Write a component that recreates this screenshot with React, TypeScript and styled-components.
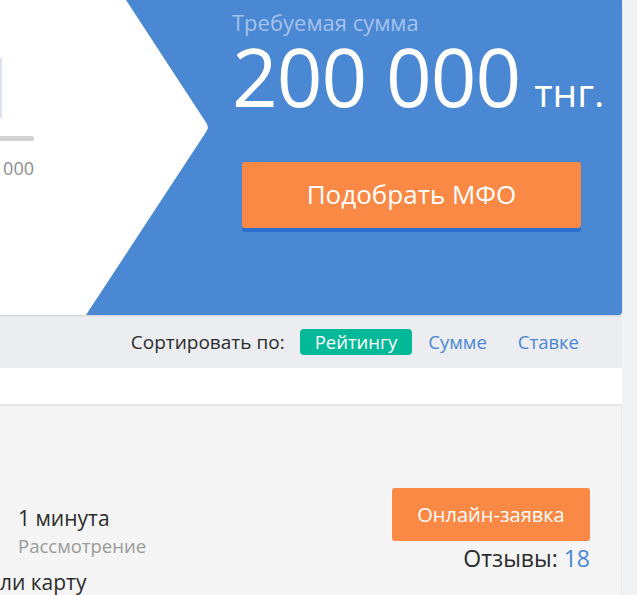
import styled, { createGlobalStyle } from 'styled-components';

const GlobalStyle = createGlobalStyle`
	html, body {
		margin: 0;
		padding: 0;
		background: #f1f2f4;
		font-family: 'Open Sans', 'Noto Sans', sans-serif;
		overflow: hidden;
	}
`;

export default function App() {
	return (
		<>
			<GlobalStyle />
			<Page>
				<Hero>
					<Chevron>
						<Calculator>
							<AmountInput />
							<Track />
							<Range>
								<span>10 000</span>
								<span>500 000</span>
							</Range>
						</Calculator>
					</Chevron>
					<Summary>
						<Caption>Требуемая сумма</Caption>
						<Amount>
							200 000
							<Currency>тнг.</Currency>
						</Amount>
						<PickButton>Подобрать МФО</PickButton>
					</Summary>
				</Hero>
				<SortBar>
					<SortLabel>Сортировать по:</SortLabel>
					<SortOption active>Рейтингу</SortOption>
					<SortOption>Сумме</SortOption>
					<SortOption>Ставке</SortOption>
				</SortBar>
				<Spacer />
				<Offer>
					<OfferRow>
						<Term>
							<TermValue>1 минута</TermValue>
							<TermLabel>Рассмотрение</TermLabel>
						</Term>
						<Actions>
							<ApplyButton>Онлайн-заявка</ApplyButton>
							<Reviews>
								Отзывы: <a>18</a>
							</Reviews>
						</Actions>
					</OfferRow>
					<Payout>На счёт или карту</Payout>
				</Offer>
			</Page>
		</>
	);
}

const Page = styled.div`
	width: 622px;
	height: 595px;
	display: flex;
	flex-direction: column;
`;

const Hero = styled.div`
	display: flex;
	height: 315px;
	flex: none;
	background: #4a88d4;
	border-bottom-right-radius: 4px;
	box-shadow: 0 1px 2px rgba(0, 0, 0, 0.12);
	position: relative;
	z-index: 1;
`;

const Chevron = styled.div`
	width: 209px;
	flex: none;
	background: #fff;
	clip-path: polygon(0 0, 126px 0, 207px 124px, 208px 128px, 206px 132px, 86px 100%, 0 100%);
	overflow: hidden;
	padding-top: 58px;
	box-sizing: border-box;
`;

const Calculator = styled.div`
	margin-left: -300px;
	width: 334px;
	display: flex;
	flex-direction: column;
`;

const AmountInput = styled.div`
	width: 302px;
	height: 60px;
	box-sizing: border-box;
	border: 2px solid #dde4f0;
`;

const Track = styled.div`
	margin-top: 18px;
	height: 5px;
	border-radius: 3px;
	background: #d2d2d2;
`;

const Range = styled.div`
	margin-top: 15px;
	display: flex;
	justify-content: space-between;
	font-size: 18px;
	color: #8c8c8c;
`;

const Summary = styled.div`
	flex: 1;
	padding: 8px 0 0 23px;
	display: flex;
	flex-direction: column;
	color: #fff;
`;

const Caption = styled.div`
	font-size: 22px;
	line-height: 28px;
	font-weight: 500;
	color: #a4c2ec;
`;

const Amount = styled.div`
	display: flex;
	align-items: baseline;
	font-size: 80px;
	line-height: 80px;
	white-space: nowrap;
	letter-spacing: -1px;
	font-weight: 500;
`;

const Currency = styled.span`
	margin-left: 14px;
	font-size: 39px;
	line-height: 40px;
	letter-spacing: 0;
`;

const PickButton = styled.button`
	margin: 46px 0 0 10px;
	width: 339px;
	height: 66px;
	border: none;
	border-radius: 3px;
	background: #f98944;
	box-shadow: 0 4px 0 #2b6fcf;
	color: #fff;
	font-family: inherit;
	font-size: 26px;
	font-weight: 500;
	padding: 0 0 2px;
`;

const SortBar = styled.div`
	height: 53px;
	flex: none;
	background: #ecedf0;
	display: flex;
	align-items: center;
	justify-content: flex-end;
	padding-right: 43px;
	gap: 16px;
	font-weight: 500;
`;

const SortLabel = styled.span`
	font-size: 19px;
	color: #2b2b2b;
	margin-right: -1px;
`;

const SortOption = styled.span<{ active?: boolean }>`
	font-size: 18.5px;
	line-height: 22px;
	padding: ${({ active }) => (active ? '2px 15px' : '2px 0')};
	border-radius: 4px;
	background: ${({ active }) => (active ? '#03b997' : 'transparent')};
	color: ${({ active }) => (active ? '#fff' : '#4a86d4')};
	margin-right: ${({ active }) => (active ? '0' : '15px')};

	&:last-child {
		margin-right: 0;
	}
`;

const Spacer = styled.div`
	height: 36px;
	flex: none;
	background: #fff;
	border-bottom: 2px solid #e6e6e6;
`;

const Offer = styled.div`
	flex: 1;
	background: #f5f5f5;
	border-right: 1px solid #e8e9eb;
	padding: 82px 31px 0 0;
	display: flex;
	flex-direction: column;
	font-weight: 500;
`;

const OfferRow = styled.div`
	display: flex;
	justify-content: space-between;
	align-items: flex-start;
`;

const Term = styled.div`
	padding: 16px 0 0 18px;
	display: flex;
	flex-direction: column;
`;

const TermValue = styled.div`
	font-size: 21px;
	line-height: 29px;
	color: #2b2b2b;
`;

const TermLabel = styled.div`
	font-size: 18.5px;
	line-height: 26px;
	color: #9a9a9a;
`;

const Actions = styled.div`
	display: flex;
	flex-direction: column;
	align-items: flex-end;
`;

const ApplyButton = styled.button`
	width: 198px;
	height: 53px;
	border: none;
	border-radius: 3px;
	background: #f98944;
	color: #fff;
	font-family: inherit;
	font-weight: 500;
	font-size: 20px;
`;

const Reviews = styled.div`
	margin-top: 2px;
	font-size: 23px;
	line-height: 30px;
	color: #2b2b2b;

	a {
		color: #4a86d4;
	}
`;

const Payout = styled.div`
	margin: -6px 0 0 -96px;
	font-size: 21px;
	line-height: 30px;
	color: #2b2b2b;
	white-space: nowrap;
`;
